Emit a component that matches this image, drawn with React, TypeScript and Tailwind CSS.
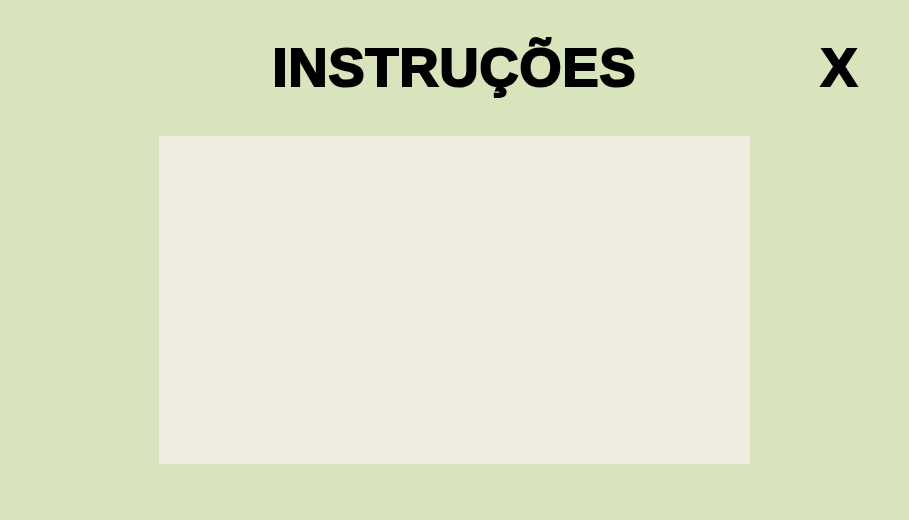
export default function App() {
  return (
    <div className="w-[909px] h-[520px] bg-[#d8e4bc] flex flex-col items-center pt-[40px] font-['Liberation_Sans',Arial,sans-serif] overflow-hidden">
      {/* Header */}
      <div className="w-full grid grid-cols-[1fr_auto_1fr] items-start">
        <div />
        <h1 className="text-[54px] leading-[54px] font-bold text-black tracking-[1px] [-webkit-text-stroke:2.2px_black]">
          INSTRUÇÕES
        </h1>
        <div className="flex justify-end pr-[52px]">
          <button className="text-[54px] leading-[54px] font-bold text-black [-webkit-text-stroke:2.2px_black]">X</button>
        </div>
      </div>

      {/* Content panel */}
      <div className="mt-[42px] w-[591px] h-[328px] bg-[#eeece1]" />
    </div>
  );
}
